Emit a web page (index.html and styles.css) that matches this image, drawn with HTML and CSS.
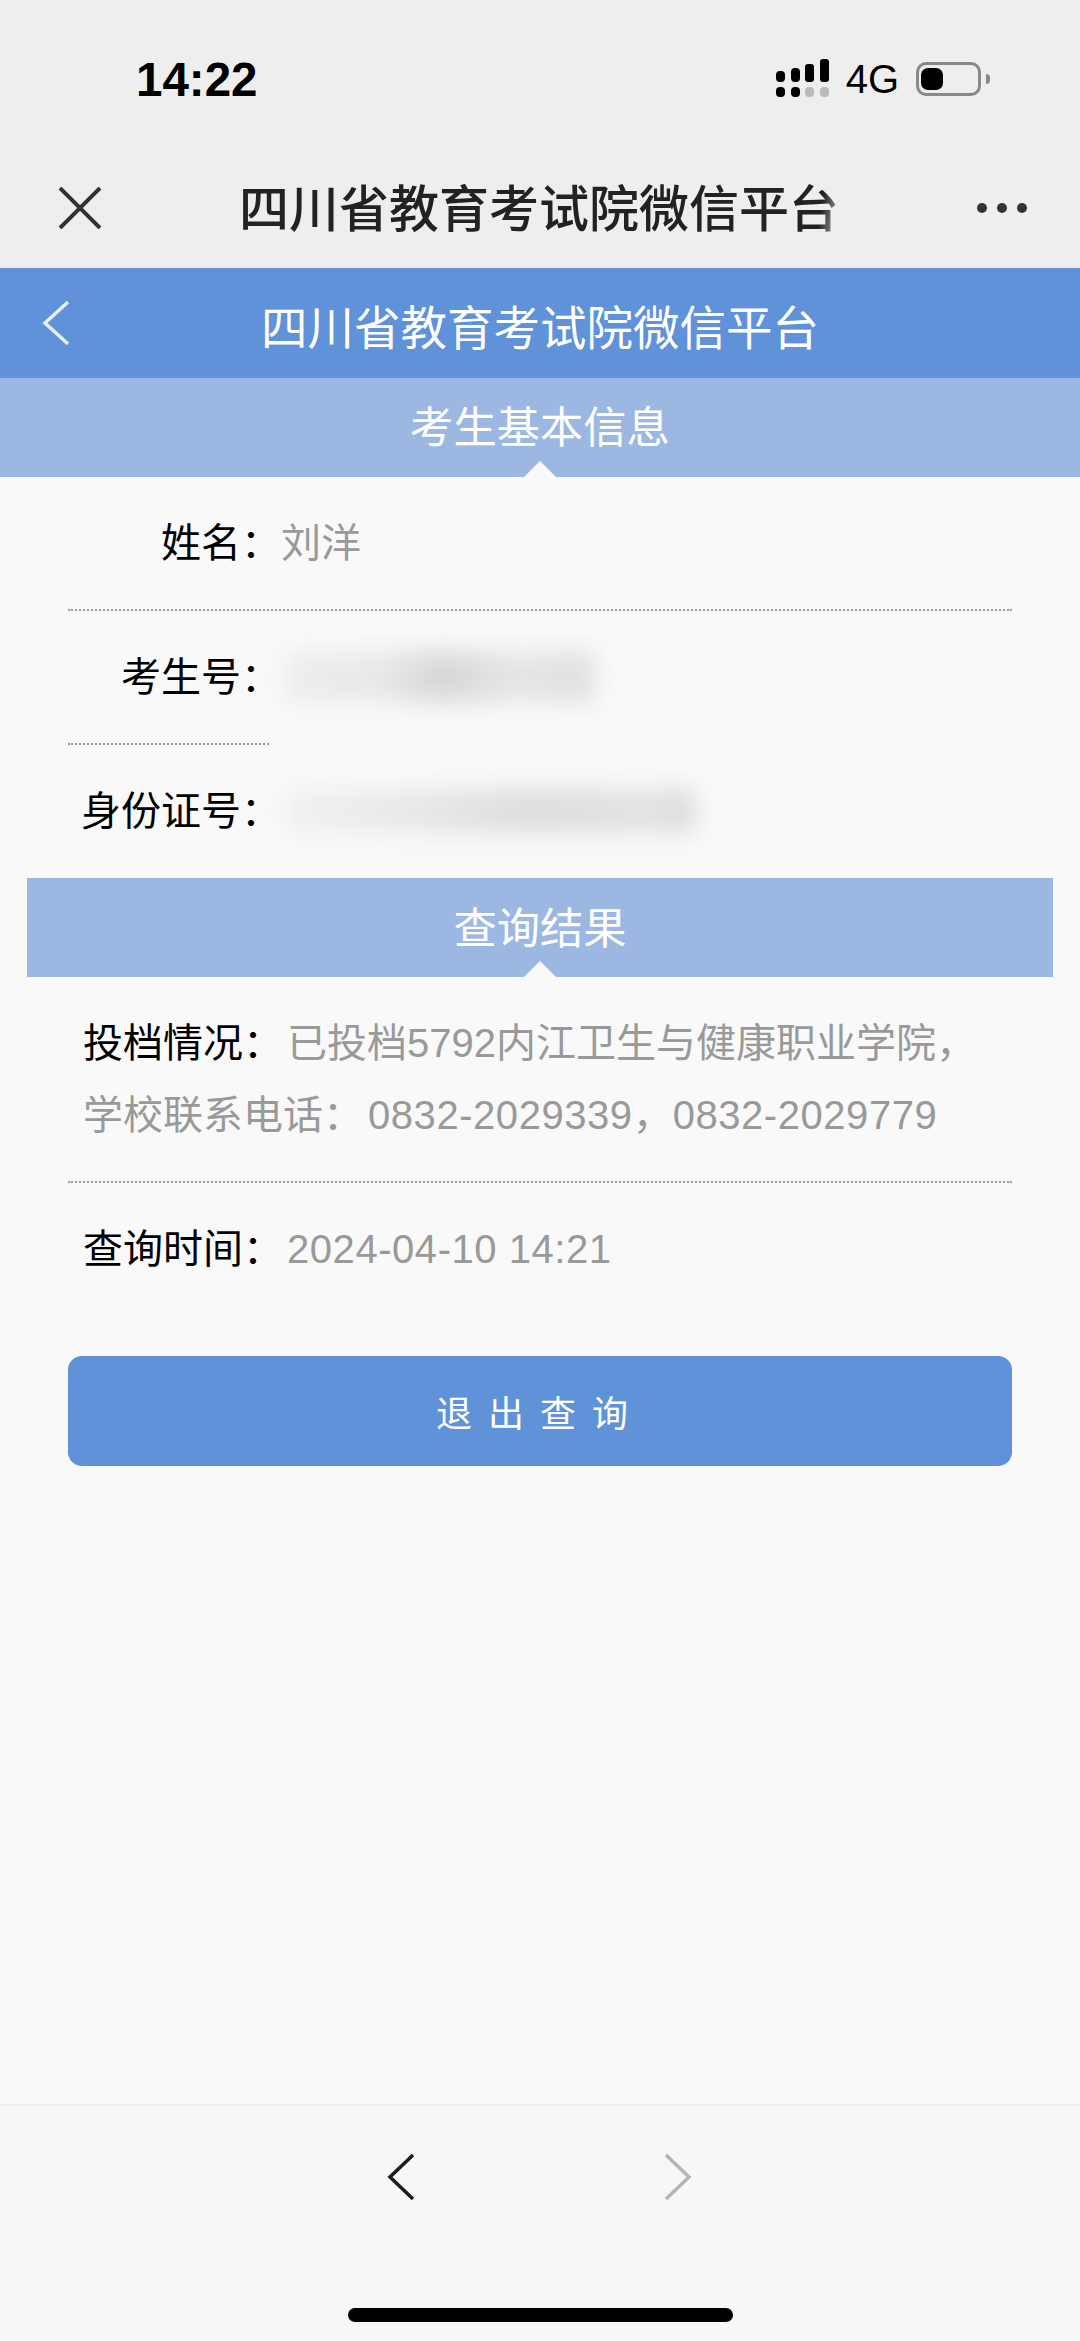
FILE: index.html
```html
<!DOCTYPE html>
<html lang="zh-CN">
<head>
<meta charset="utf-8">
<title>四川省教育考试院微信平台</title>
<link rel="stylesheet" href="styles.css">
</head>
<body>
<div id="Container">
  <div class="statusbar">
    <span class="clock">14:22</span>
    <div class="status-right">
      <svg class="signal" width="53" height="40" viewBox="0 0 53 40">
        <rect x="0" y="12" width="9" height="11" rx="4" fill="#000"/>
        <rect x="15" y="9" width="9" height="14" rx="4" fill="#000"/>
        <rect x="29" y="5" width="9" height="18" rx="3" fill="#000"/>
        <rect x="44" y="0" width="9" height="23" rx="3" fill="#000"/>
        <rect x="0" y="28" width="9" height="10" rx="4" fill="#000"/>
        <rect x="15" y="28" width="9" height="10" rx="4" fill="#000"/>
        <rect x="29" y="28" width="9" height="10" rx="4" fill="#bbb"/>
        <rect x="44" y="28" width="9" height="10" rx="4" fill="#bbb"/>
      </svg>
      <span class="net">4G</span>
      <div class="battery"><div class="battery-fill"></div></div>
      <div class="battery-cap"></div>
    </div>
  </div>

  <div class="wxbar">
    <svg class="wx-close" width="44" height="42" viewBox="0 0 44 42">
      <path d="M2 1 L42 41 M42 1 L2 41" stroke="#333" stroke-width="4" fill="none"/>
    </svg>
    <div class="wx-title">四川省教育考试院微信平台</div>
    <svg class="wx-more" width="52" height="12" viewBox="0 0 52 12">
      <circle cx="6" cy="6" r="5" fill="#333"/>
      <circle cx="26" cy="6" r="5" fill="#333"/>
      <circle cx="46" cy="6" r="5" fill="#333"/>
    </svg>
  </div>

  <div class="pagehead">
    <svg class="pagehead-back" width="28" height="46" viewBox="0 0 28 46">
      <path d="M26 2 L3 23 L26 44" stroke="#e6eefa" stroke-width="3.5" fill="none"/>
    </svg>
    <div class="pagehead-title">四川省教育考试院微信平台</div>
  </div>

  <div id="Content">
    <div class="bar">考生基本信息</div>
    <div class="info first">
      <div class="smear"></div>
      <div class="row">
        <span class="label">姓名：</span><span class="value">刘洋</span>
      </div>
      <div class="row">
        <span class="label">考生号：</span><span class="blurred blur-exam"></span>
      </div>
      <div class="row noline">
        <span class="label">身份证号：</span><span class="blurred blur-id"></span>
      </div>
    </div>

    <div class="bar inset">查询结果</div>
    <div class="info">
      <div class="row textrow">
        <b>投档情况：</b><span class="value gap">已投档5792内江卫生与健康职业学院，学校联系电话：<span class="num first-num">0832-2029339</span>，<span class="num">0832-2029779</span></span>
      </div>
      <div class="row textrow noline">
        <b>查询时间：</b><span class="value gap num">2024-04-10 14:21</span>
      </div>
      <button type="button" class="quit">退出查询</button>
    </div>
  </div>

  <div class="toolbar">
    <div class="toolbar-nav">
      <svg width="28" height="48" viewBox="0 0 28 48">
        <path d="M26 2 L3 24 L26 46" stroke="#1c1c1c" stroke-width="3.5" fill="none"/>
      </svg>
      <svg width="28" height="48" viewBox="0 0 28 48">
        <path d="M2 2 L25 24 L2 46" stroke="#b5b5b5" stroke-width="3.5" fill="none"/>
      </svg>
    </div>
    <div class="homebar"></div>
  </div>
</div>
</body>
</html>
```

FILE: styles.css
```css
html, body { margin:0; padding:0; }
body { background:#f9f9f9; color:#000; font-family:"Liberation Sans", "Noto Sans CJK SC", sans-serif; font-size:40px; }
#Container { width:1080px; height:2341px; display:flex; flex-direction:column; overflow:hidden; }
#Content { flex:1; }

.statusbar { padding:10px 90px 0 136px; box-sizing:border-box; height:148px; background:#eee; display:flex; align-items:center; justify-content:space-between; }
.clock { font-size:47.5px; font-weight:bold; color:#000; }
.status-right { display:flex; align-items:center; }
.signal { margin-right:17px; }
.net { font-size:40px; color:#000; margin-right:17px; }
.battery { width:57px; height:25px; border:3px solid #888; border-radius:10px; padding:3px 0 0 2px; }
.battery-fill { width:22px; height:22px; background:#000; border-radius:7px; }
.battery-cap { width:4px; height:10px; margin-left:5px; background:#888; border-radius:0 4px 4px 0; }

.wxbar { height:120px; background:#eee; display:flex; align-items:center; padding:0 52px 0 58px; justify-content:space-between; }
.wx-title { font-size:50px; font-weight:500; color:#222; white-space:nowrap; padding-bottom:7px; -webkit-mask-image:linear-gradient(100deg, #000 96%, transparent 101%); mask-image:linear-gradient(100deg, #000 96%, transparent 101%); }

.pagehead { height:110px; background:#5f92d8; display:flex; align-items:center; padding-left:42px; color:#fff; }
.pagehead-title { flex:1; text-align:center; font-size:46.5px; margin-left:-70px; padding-top:2px; white-space:nowrap; }

.bar { height:99px; line-height:101px; background:#9cb8e2; color:#fff; text-align:center; font-size:43.3px; position:relative; }
.bar::after { content:""; position:absolute; left:50%; bottom:0; margin-left:-16px; border-left:16px solid transparent; border-right:16px solid transparent; border-bottom:16px solid #f9f9f9; }
.bar.inset { margin:0 27px; line-height:103px; }

.info { padding:0 68px; position:relative; }
.info.first { padding-bottom:1px; }
.smear { position:absolute; left:270px; top:148px; width:744px; height:225px; background:#fafafa; }
.row { display:flex; align-items:center; padding:30px 0; line-height:72px; border-bottom:2px dotted #999; }
.row.noline { border-bottom:none; }
.label { width:213px; text-align:right; flex:none; }
.value { color:#999; }
.blurred { display:block; height:52px; margin-left:4px; filter:blur(12px); }
.blur-exam { width:310px; background:linear-gradient(90deg, #ececec, #e9e9e9 30%, #d6d6d6 50%, #e6e6e6 75%, #e0e0e0 95%); }
.blur-id { width:410px; height:44px; background:linear-gradient(90deg, #f0f0f0, #e8e8e8 30%, #dcdcdc 60%, #e2e2e2 90%, #d8d8d8); }

.textrow { display:block; padding-left:15px; }
.textrow b { font-weight:normal; }
.gap { margin-left:4px; }
.num { letter-spacing:.55px; }
.first-num { margin-left:5px; }

.quit { display:block; width:100%; height:110px; margin-top:41px; border:none; border-radius:14px; background:#5f92d8; color:#fff; font-family:inherit; font-size:36px; letter-spacing:16px; padding:0; }

.toolbar { height:235px; background:#f7f7f7; border-top:2px solid #ececec; }
.toolbar-nav { display:flex; justify-content:space-between; padding:47px 388px 0 387px; }
.homebar { width:385px; height:14px; margin:107px auto 0; background:#000; border-radius:7px; }
```
